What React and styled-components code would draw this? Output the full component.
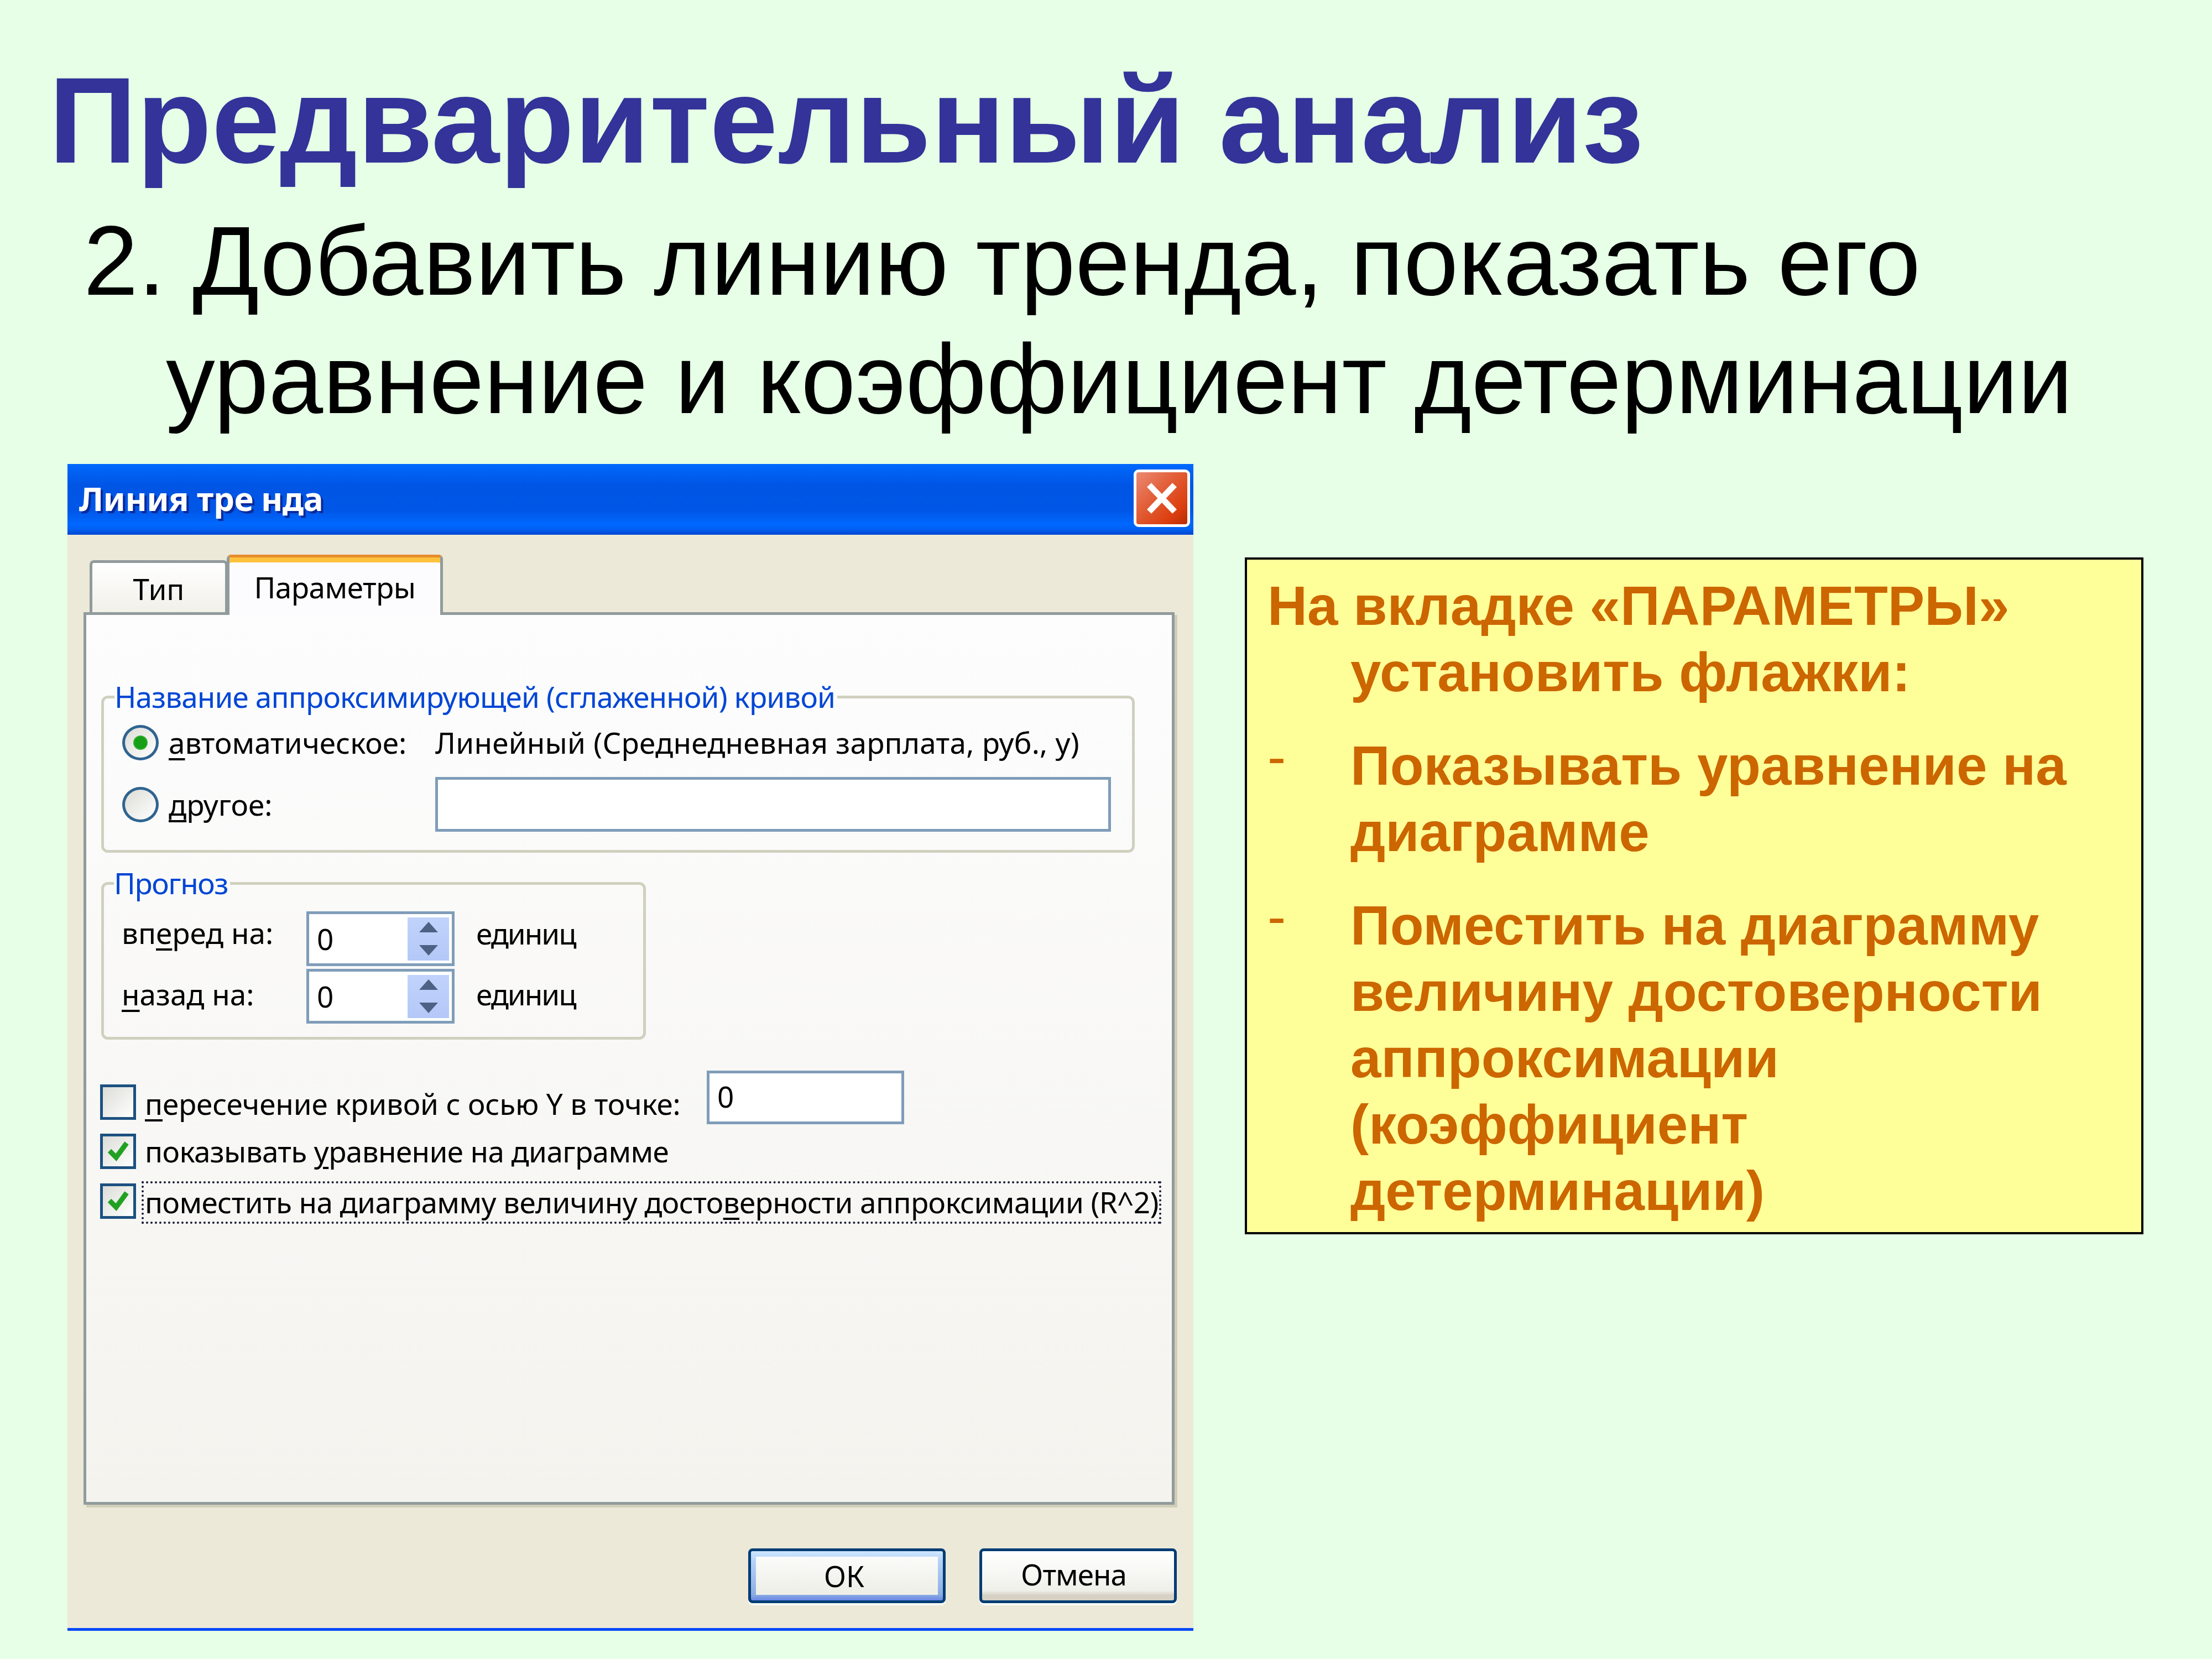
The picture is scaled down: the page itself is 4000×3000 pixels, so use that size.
import React from "react";
import styled, { createGlobalStyle } from "styled-components";

const Global = createGlobalStyle`
  * { box-sizing: border-box; }
  html, body { margin: 0; padding: 0; }
  body { background: #e6ffe6; font-family: "Liberation Sans", Arial, sans-serif; }
`;

const Page = styled.div`
  width: 4000px;
  height: 3000px;
  overflow: hidden;
  background: #e6ffe6;
`;

const Heading = styled.h1`
  margin: 0;
  height: 350px;
  padding: 86px 0 0 88px;
  font-size: 221.6px;
  line-height: 262px;
  font-weight: 700;
  color: #333399;
  white-space: nowrap;
`;

const Lead = styled.div`
  height: 489px;
  padding: 15px 0 0 300px;
  text-indent: -149px;
  font-size: 177.5px;
  line-height: 214px;
  color: #000;
  white-space: nowrap;
`;

const Main = styled.div`
  display: flex;
  align-items: flex-start;
  padding-left: 122px;
`;

const Dialog = styled.div`
  width: 2036px;
  height: 2110px;
  flex: none;
  font-family: "Noto Sans", Tahoma, sans-serif;
  font-size: 53px;
  line-height: 64px;
  color: #000;
  white-space: nowrap;
`;

const TitleBar = styled.div`
  height: 128px;
  display: flex;
  align-items: center;
  justify-content: space-between;
  padding: 0 6px 4px 21px;
  background: linear-gradient(
    #0069ff 0%,
    #0062f4 10%,
    #0055e5 30%,
    #0056e6 65%,
    #0068ff 85%,
    #0060f2 92%,
    #0045d0 100%
  );
`;

const TitleText = styled.div`
  font-weight: 700;
  font-size: 60px;
  letter-spacing: -0.5px;
  color: #fff;
  text-shadow: 4px 4px 0 #0a2a9a;
  span {
    margin-left: 14px;
  }
`;

const CloseButton = styled.div`
  width: 102px;
  height: 104px;
  display: flex;
  align-items: center;
  justify-content: center;
  border: 5px solid #fff;
  border-radius: 9px;
  background: linear-gradient(135deg, #ec8a73 0%, #e2603a 40%, #dd4011 75%, #b92c04 100%);
`;

const DialogBody = styled.div`
  height: 1982px;
  padding: 36px 0 0 29px;
  background: #ece9d8;
  border-bottom: 5px solid #0047f5;
`;

const TabRow = styled.div`
  display: flex;
  align-items: flex-end;
  height: 104px;
  padding-left: 11px;
`;

const Tab = styled.div`
  position: relative;
  display: flex;
  justify-content: center;
  width: ${(p) => (p.$active ? "391px" : "250px")};
  height: ${(p) => (p.$active ? "109px" : "94px")};
  margin-bottom: ${(p) => (p.$active ? "-5px" : "0")};
  margin-left: ${(p) => (p.$active ? "-2px" : "0")};
  padding-top: ${(p) => (p.$active ? "22px" : "15px")};
  border: 5px solid #919b9c;
  border-bottom: 0;
  border-top: 5px solid ${(p) => (p.$active ? "#e68b2c" : "#919b9c")};
  border-radius: 8px 8px 0 0;
  background: ${(p) => (p.$active ? "#fcfcfe" : "linear-gradient(#fff, #f1f0e9)")};
  box-shadow: ${(p) => (p.$active ? "inset 0 9px 0 #ffc23c" : "none")};
  letter-spacing: ${(p) => (p.$active ? "-0.5px" : "0")};
  z-index: ${(p) => (p.$active ? 2 : 1)};
`;

const TabPane = styled.div`
  width: 1973px;
  height: 1614px;
  padding: 118px 0 0 27px;
  border: 5px solid #919b9c;
  background: linear-gradient(#fdfdfe, #f4f3ee);
  box-shadow: 5px 5px 0 #d0ceb8;
`;

const Group = styled.fieldset`
  margin: ${(p) => p.$top || 0}px 0 0 0;
  padding: ${(p) => p.$pad}px 0 0 ${(p) => p.$left}px;
  width: ${(p) => p.$w}px;
  height: ${(p) => p.$h}px;
  border: 5px solid #d0d0bf;
  border-radius: 12px;
`;

const Legend = styled.legend`
  margin-left: -14px;
  padding: 0 4px 0 0;
  height: 60px;
  line-height: 60px;
  color: #0046d5;
  letter-spacing: ${(p) => p.$ls || 0}px;
`;

const Row = styled.div`
  display: flex;
  align-items: center;
  height: ${(p) => p.$h}px;
  margin-top: ${(p) => p.$top || 0}px;
`;

const Radio = styled.div`
  width: 66px;
  height: 64px;
  flex: none;
  display: flex;
  align-items: center;
  justify-content: center;
  border: 5px solid #2f6490;
  border-radius: 50%;
  background: linear-gradient(135deg, #dcdcd6, #fff);
  margin-right: 18px;
`;

const RadioDot = styled.div`
  width: 26px;
  height: 26px;
  border-radius: 50%;
  background: radial-gradient(circle, #17a017 55%, #8fd08f 100%);
`;

const Label = styled.div`
  width: ${(p) => (p.$w ? `${p.$w}px` : "auto")};
  flex: none;
  letter-spacing: ${(p) => p.$ls || 0}px;
  u {
    text-decoration-thickness: 4px;
    text-underline-offset: 8px;
  }
`;

const SpinLabel = styled(Label)`
  margin-top: ${(p) => p.$top || 0}px;
`;

const Unit = styled(SpinLabel)`
  margin-left: 39px;
  letter-spacing: -2px;
`;

const TextField = styled.div`
  width: ${(p) => p.$w}px;
  height: ${(p) => p.$h}px;
  flex: none;
  padding-left: 14px;
  line-height: ${(p) => p.$h - 14}px;
  border: 5px solid #7f9db9;
  background: #fff;
`;

const SpinField = styled(TextField)`
  display: flex;
  justify-content: space-between;
  align-items: center;
  padding-right: 5px;
`;

const SpinButton = styled.div`
  width: 75px;
  height: 78px;
  display: flex;
  flex-direction: column;
  align-items: center;
  justify-content: space-around;
  background: linear-gradient(#c1d3fb, #b4c8f8);
`;

const CheckRow = styled.div`
  display: flex;
  align-items: flex-start;
  height: ${(p) => p.$h}px;
  margin: ${(p) => p.$top || 0}px 0 0 -2px;
`;

const CheckBox = styled.div`
  width: 65px;
  height: 64px;
  flex: none;
  display: flex;
  align-items: center;
  justify-content: center;
  margin-top: ${(p) => p.$top || 0}px;
  margin-right: 10px;
  border: 5px solid #1c5180;
  background: linear-gradient(135deg, #dcdcd7, #fff);
`;

const CheckLabel = styled(Label)`
  padding: ${(p) => p.$top || 0}px 0 0 6px;
`;

const FocusLabel = styled(Label)`
  width: 1844px;
  height: 77px;
  padding: 2px 0 0 2px;
  border: 4px dotted #1a1a3a;
`;

const ButtonRow = styled.div`
  display: flex;
  justify-content: flex-end;
  gap: 61px;
  width: 1977px;
  padding-top: 79px;
`;

const Button = styled.div`
  width: 357px;
  height: 99px;
  border: 5px solid #003c74;
  border-radius: 8px;
  background: ${(p) =>
    p.$default
      ? "linear-gradient(#cee7ff 0%, #b6d2f6 20%, #98b8ea 70%, #8aaee2 88%, #6b85e6 100%)"
      : "linear-gradient(#fff 0%, #f0f0ea 80%, #d6d0c5 90%, #d6d0c5 100%)"};
  box-shadow: 0 4px 0 #fbfbf6;
  padding: ${(p) => (p.$default ? "10px 9px" : "0")};
`;

const ButtonFace = styled.div`
  height: ${(p) => (p.$default ? "69px" : "84px")};
  display: flex;
  align-items: center;
  justify-content: center;
  padding-right: ${(p) => (p.$default ? "10px" : "16px")};
  background: ${(p) => (p.$default ? "linear-gradient(#fbfbf9, #eeeee7)" : "transparent")};
  letter-spacing: ${(p) => p.$ls || 0}px;
`;

const Note = styled.div`
  flex: none;
  width: 1625px;
  height: 1224px;
  margin: 169px 0 0 93px;
  padding: 24px 0 0 37px;
  border: 4px solid #000;
  background: #ffff99;
  color: #cc6600;
  font-weight: 700;
  font-size: 99.7px;
  line-height: 120px;
  white-space: nowrap;
`;

const NoteLead = styled.div`
  padding-left: 150px;
  text-indent: -150px;
`;

const NoteItem = styled.div`
  display: flex;
  margin-top: 49px;
`;

const Marker = styled.div`
  width: 150px;
  flex: none;
  font-weight: 400;
  transform: translateY(-16px);
`;

const CloseIcon = () => (
  <svg width="58" height="60" viewBox="0 0 58 60">
    <path d="M6 6 L52 54 M52 6 L6 54" stroke="#fff" strokeWidth="11" fill="none" />
  </svg>
);

const CheckIcon = () => (
  <svg width="38" height="38" viewBox="0 0 38 38">
    <path d="M3 18 L15 30 L34 4" stroke="#21a121" strokeWidth="9" fill="none" />
  </svg>
);

const SpinArrow = ({ down }) => (
  <svg width="36" height="24" viewBox="0 0 36 24">
    <path d={down ? "M1 4 H35 L18 23 Z" : "M18 1 L35 20 H1 Z"} fill="#4d6185" />
  </svg>
);

const Spinner = () => (
  <SpinField $w={268} $h={99}>
    0
    <SpinButton>
      <SpinArrow />
      <SpinArrow down />
    </SpinButton>
  </SpinField>
);

export default function App() {
  return (
    <Page>
      <Global />
      <Heading>Предварительный анализ</Heading>
      <Lead>
        2. Добавить линию тренда, показать его
        <br />
        уравнение и коэффициент детерминации
      </Lead>
      <Main>
        <Dialog>
          <TitleBar>
            <TitleText>
              Линия тре<span>нда</span>
            </TitleText>
            <CloseButton>
              <CloseIcon />
            </CloseButton>
          </TitleBar>
          <DialogBody>
            <TabRow>
              <Tab>Тип</Tab>
              <Tab $active>Параметры</Tab>
            </TabRow>
            <TabPane>
              <Group $w={1869} $h={312} $pad={21} $left={33}>
                <Legend $ls={-0.85}>Название аппроксимирующей (сглаженной) кривой</Legend>
                <Row $h={64}>
                  <Radio>
                    <RadioDot />
                  </Radio>
                  <Label $w={482}>
                    <u>а</u>втоматическое:
                  </Label>
                  <Label $ls={0.25}>Линейный (Среднедневная зарплата, руб., y)</Label>
                </Row>
                <Row $h={99} $top={30}>
                  <Radio />
                  <Label $w={482}>
                    <u>д</u>ругое:
                  </Label>
                  <TextField $w={1222} $h={99} />
                </Row>
              </Group>
              <Group $top={25} $w={985} $h={313} $pad={21} $left={32}>
                <Legend $ls={-1.4}>Прогноз</Legend>
                <Row $h={99}>
                  <SpinLabel $w={334} $top={-22}>
                    вп<u>е</u>ред на:
                  </SpinLabel>
                  <Spinner />
                  <Unit $top={-20}>единиц</Unit>
                </Row>
                <Row $h={99} $top={5}>
                  <SpinLabel $w={334} $top={-8}>
                    <u>н</u>азад на:
                  </SpinLabel>
                  <Spinner />
                  <Unit $top={-8}>единиц</Unit>
                </Row>
              </Group>
              <CheckRow $h={97} $top={56}>
                <CheckBox $top={25} />
                <CheckLabel $w={1022} $top={28} $ls={-0.15}>
                  <u>п</u>ересечение кривой с осью Y в точке:
                </CheckLabel>
                <TextField $w={357} $h={97}>
                  0
                </TextField>
              </CheckRow>
              <CheckRow $h={64} $top={17}>
                <CheckBox>
                  <CheckIcon />
                </CheckBox>
                <CheckLabel $ls={-0.6}>
                  показывать <u>у</u>равнение на диаграмме
                </CheckLabel>
              </CheckRow>
              <CheckRow $h={77} $top={22}>
                <CheckBox $top={4}>
                  <CheckIcon />
                </CheckBox>
                <FocusLabel $ls={-0.6}>
                  поместить на диаграмму величину досто<u>в</u>ерности аппроксимации (R^2)
                </FocusLabel>
              </CheckRow>
            </TabPane>
            <ButtonRow>
              <Button $default>
                <ButtonFace $default>ОК</ButtonFace>
              </Button>
              <Button>
                <ButtonFace $ls={-1}>Отмена</ButtonFace>
              </Button>
            </ButtonRow>
          </DialogBody>
        </Dialog>
        <Note>
          <NoteLead>
            На вкладке «ПАРАМЕТРЫ»
            <br />
            установить флажки:
          </NoteLead>
          <NoteItem>
            <Marker>-</Marker>
            <div>
              Показывать уравнение на
              <br />
              диаграмме
            </div>
          </NoteItem>
          <NoteItem>
            <Marker>-</Marker>
            <div>
              Поместить на диаграмму
              <br />
              величину достоверности
              <br />
              аппроксимации
              <br />
              (коэффициент
              <br />
              детерминации)
            </div>
          </NoteItem>
        </Note>
      </Main>
    </Page>
  );
}
